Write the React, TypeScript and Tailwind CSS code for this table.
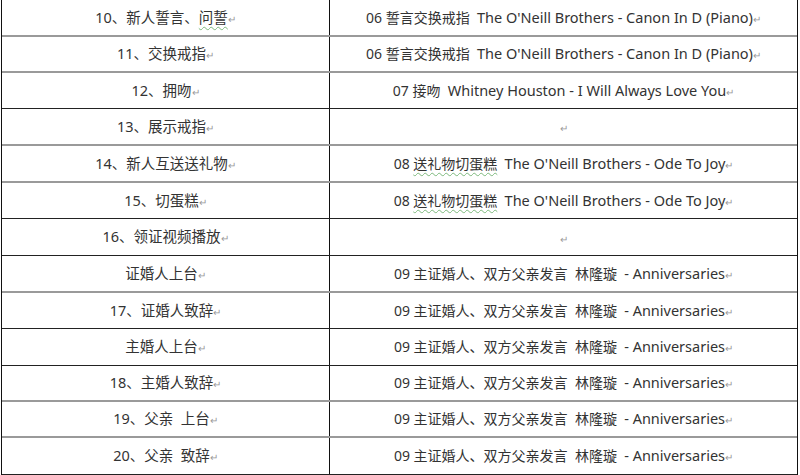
import React from 'react';

type Row = {
  left: React.ReactNode;
  right: React.ReactNode;
  h: string;
  line: 'gray' | 'dark';
};

function Mark() {
  return <span className="text-[10px] text-[#9a9a9a] align-middle">↵</span>;
}

function Wavy({ children }: { children: React.ReactNode }) {
  return (
    <span className="underline decoration-wavy decoration-[#7cb87c] decoration-1 underline-offset-[3px]">
      {children}
    </span>
  );
}

function En({ children }: { children: React.ReactNode }) {
  return <span className="text-[14.5px]">{children}</span>;
}

const canon = <>06 誓言交换戒指  <En>The O'Neill Brothers - Canon In D (Piano)</En></>;
const joy = <>08 <Wavy>送礼物切蛋糕</Wavy>  <En>The O'Neill Brothers - Ode To Joy</En></>;
const anniv = <>09 主证婚人、双方父亲发言  林隆璇  <En>- Anniversaries</En></>;

const rows: Row[] = [
  { left: <>10、新人誓言、<Wavy>问誓</Wavy></>, right: canon, h: 'h-[37px]', line: 'gray' },
  { left: '11、交换戒指', right: canon, h: 'h-[36px]', line: 'gray' },
  { left: '12、拥吻', right: <>07 接吻  <En>Whitney Houston - I Will Always Love You</En></>, h: 'h-[36px]', line: 'dark' },
  { left: '13、展示戒指', right: '', h: 'h-[37px]', line: 'gray' },
  { left: '14、新人互送送礼物', right: joy, h: 'h-[37px]', line: 'gray' },
  { left: '15、切蛋糕', right: joy, h: 'h-[36px]', line: 'dark' },
  { left: '16、领证视频播放', right: '', h: 'h-[37px]', line: 'dark' },
  { left: '证婚人上台', right: anniv, h: 'h-[37px]', line: 'gray' },
  { left: '17、证婚人致辞', right: anniv, h: 'h-[36px]', line: 'dark' },
  { left: '主婚人上台', right: anniv, h: 'h-[37px]', line: 'dark' },
  { left: '18、主婚人致辞', right: anniv, h: 'h-[36px]', line: 'gray' },
  { left: '19、父亲  上台', right: anniv, h: 'h-[36px]', line: 'gray' },
  { left: '20、父亲  致辞', right: anniv, h: 'h-[37px]', line: 'dark' },
];

export default function App() {
  return (
    <div className="w-[800px] h-[475px] overflow-hidden bg-white">
      <div
        className="ml-[1px] w-[797px] border-x border-[#111] text-[#333] whitespace-pre"
        style={{ fontFamily: '"Noto Sans", "Noto Sans CJK SC", sans-serif' }}
      >
        {rows.map((r, i) => (
          <div
            key={i}
            className={`grid grid-cols-[328px_1fr] ${r.h} ${
              r.line === 'gray' ? 'border-b-2 border-[#9a9a9a]' : 'border-b border-[#222]'
            }`}
          >
            <div className="flex items-center justify-center border-r border-[#111] text-[14.5px]">
              <span>
                {r.left}
                <Mark />
              </span>
            </div>
            <div className="flex items-center justify-center text-[14px]">
              <span>
                {r.right}
                <Mark />
              </span>
            </div>
          </div>
        ))}
      </div>
    </div>
  );
}
